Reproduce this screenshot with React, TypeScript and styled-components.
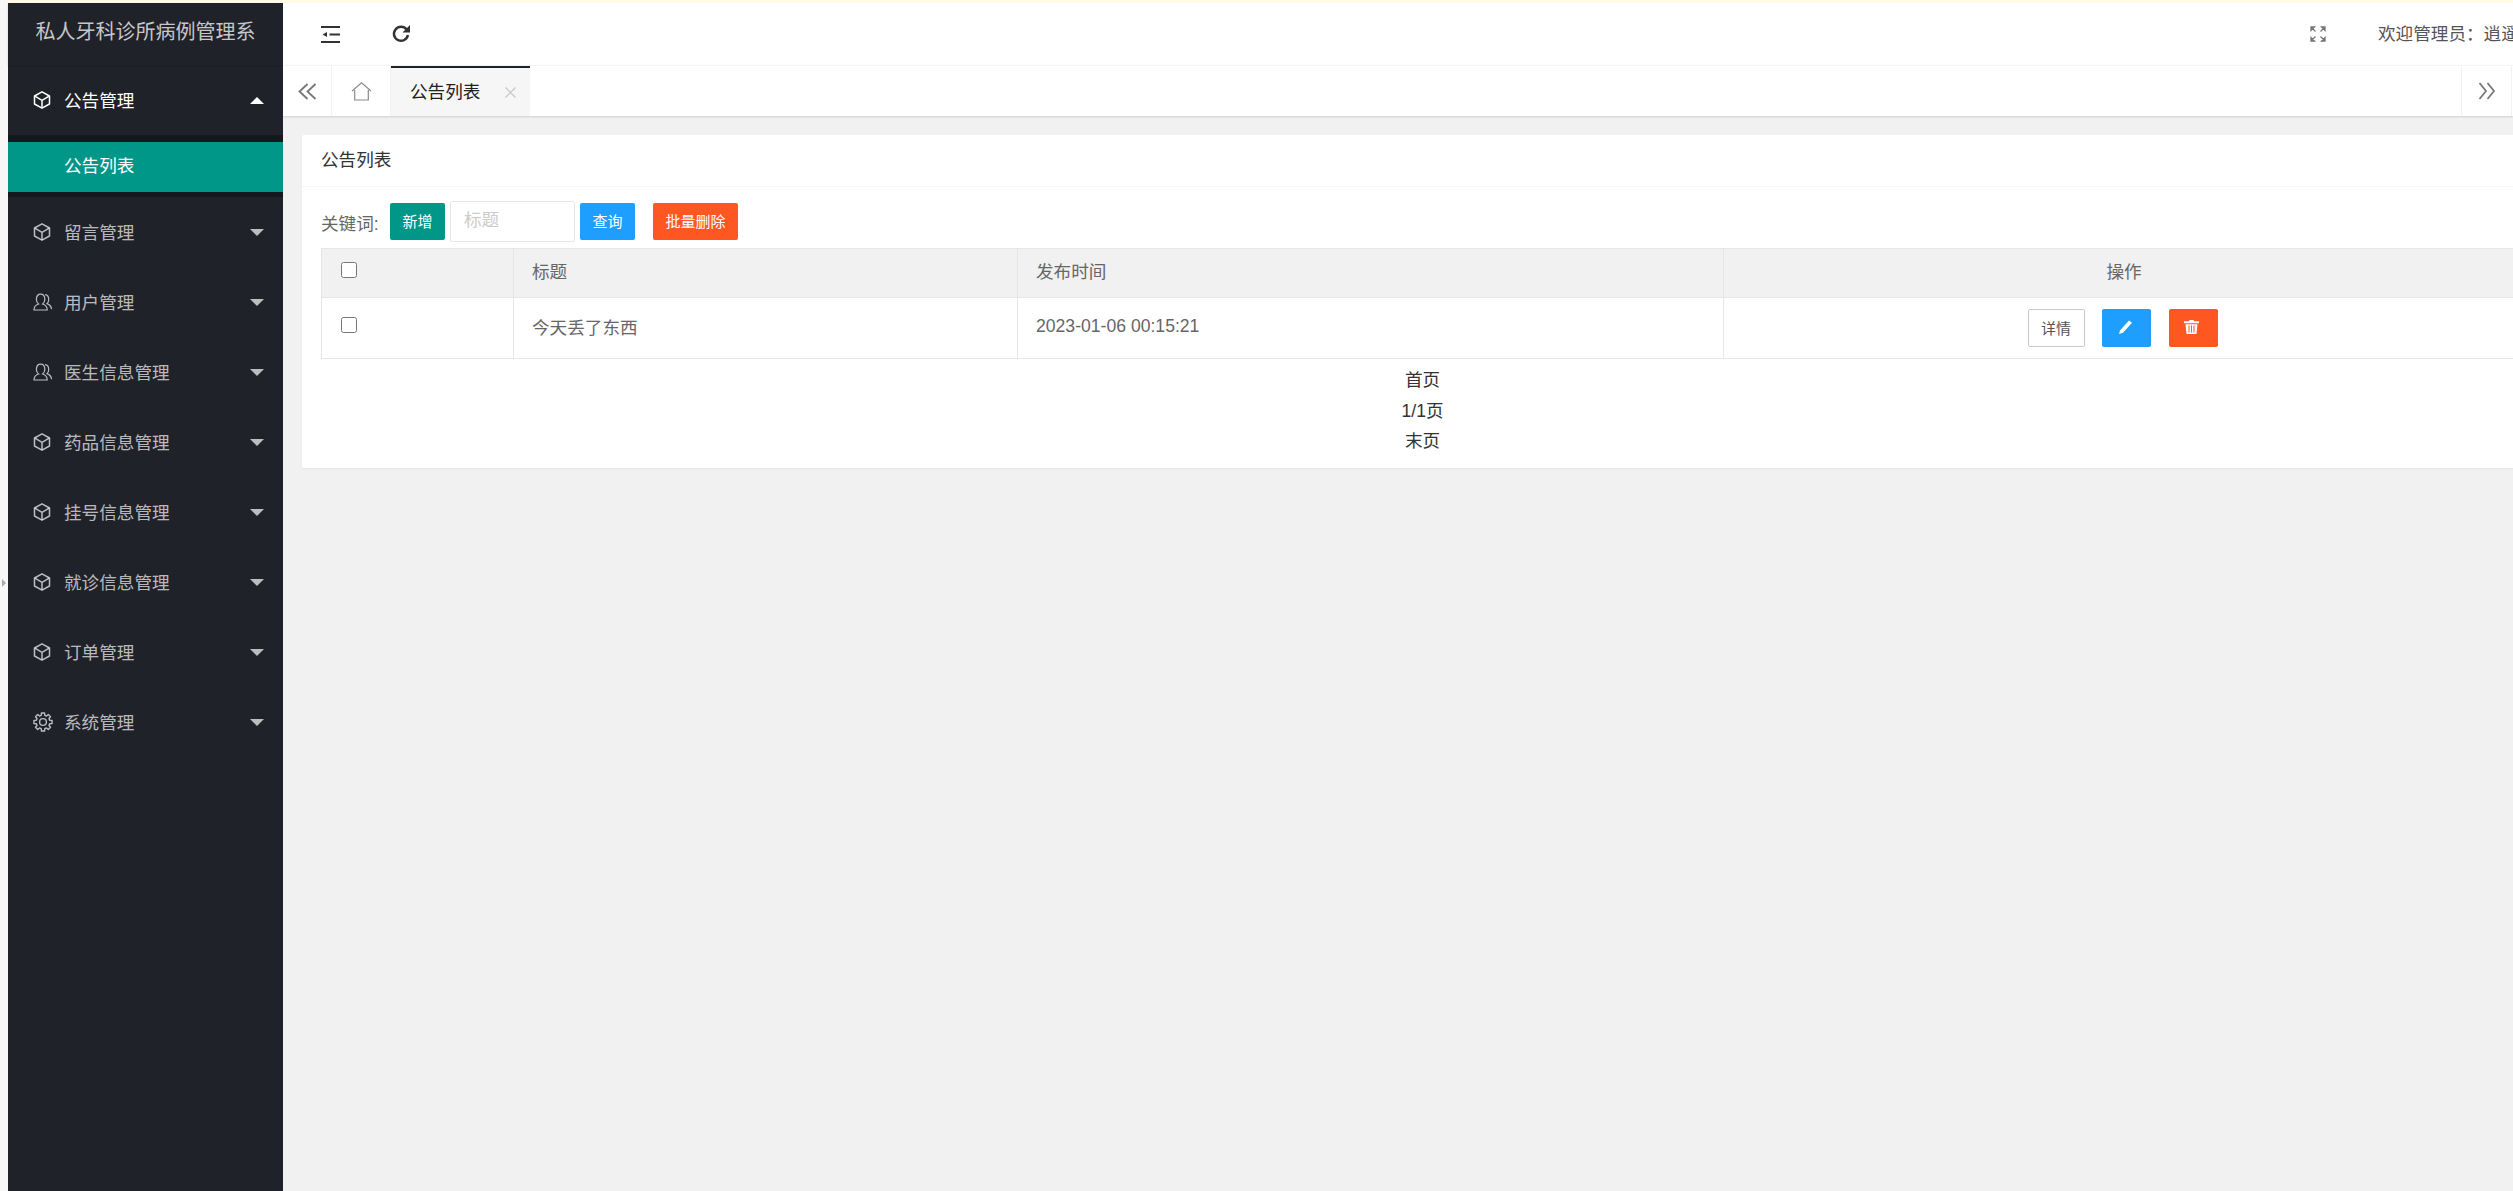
import React from 'react';
import styled, { createGlobalStyle } from 'styled-components';

const GlobalStyle = createGlobalStyle`
  html, body {
    margin: 0;
    padding: 0;
    height: 100%;
    overflow: hidden;
    background: #f7f7f7;
  }
  * { box-sizing: border-box; }
  body {
    font-family: "Liberation Sans", "Noto Sans CJK SC", sans-serif;
    font-size: 17.6px;
    color: #333;
  }
  svg { flex: none; }
`;

const Page = styled.div`
  height: 1191px;
  width: 2513px;
  display: flex;
  flex-direction: column;
  overflow: hidden;
`;

const TopStrip = styled.div`
  height: 3px;
  flex: none;
  background: #fffbe6;
  margin-left: 8px;
`;

const Body = styled.div`
  flex: 1;
  min-height: 0;
  display: flex;
`;

const Gutter = styled.div`
  width: 8px;
  flex: none;
  display: flex;
  align-items: center;
  justify-content: center;
`;

const GutterArrow = styled.span`
  width: 0;
  height: 0;
  margin: -29px 0 0 -1px;
  border-left: 4px solid #aaa;
  border-top: 4px solid transparent;
  border-bottom: 4px solid transparent;
`;

const Sidebar = styled.aside`
  width: 275px;
  flex: none;
  background: #20222a;
  display: flex;
  flex-direction: column;
`;

const Brand = styled.div`
  height: 62px;
  flex: none;
  text-align: center;
  line-height: 59px;
  font-size: 20px;
  color: rgba(255, 255, 255, 0.75);
  white-space: nowrap;
  overflow: hidden;
  box-shadow: 0 1px 2px rgba(0, 0, 0, 0.15);
`;

const MenuItem = styled.div<{ $open?: boolean }>`
  height: 70px;
  flex: none;
  display: flex;
  align-items: center;
  padding: 0 19px 0 25px;
  color: ${(p) => (p.$open ? '#fff' : 'rgba(255, 255, 255, 0.7)')};
`;

const MenuIcon = styled.span`
  width: 31px;
  flex: none;
  display: flex;
  align-items: center;
`;

const MenuLabel = styled.span`
  flex: 1;
  padding-bottom: 2px;
  font-size: 17.6px;
  white-space: nowrap;
`;

const Caret = styled.span<{ $open?: boolean }>`
  width: 0;
  height: 0;
  border-left: 7px solid transparent;
  border-right: 7px solid transparent;
  ${(p) =>
    p.$open
      ? 'border-bottom: 7px solid #fff;'
      : 'border-top: 7px solid rgba(255, 255, 255, 0.7);'}
`;

const SubMenu = styled.div`
  height: 62px;
  flex: none;
  background: #16171d;
  padding: 7px 0 5px;
`;

const SubItem = styled.div`
  height: 50px;
  line-height: 49px;
  padding-left: 56px;
  background: #009688;
  color: #fff;
`;

const Main = styled.main`
  flex: 1;
  min-width: 0;
  display: flex;
  flex-direction: column;
  background: #f1f1f1;
  overflow: hidden;
`;

const Header = styled.header`
  height: 62px;
  flex: none;
  background: #fff;
  display: flex;
  align-items: center;
  justify-content: space-between;
  padding-left: 38px;
  overflow: hidden;
`;

const HeaderTools = styled.div`
  display: flex;
  align-items: center;
  gap: 52px;
  color: #333;
`;

const HeaderRight = styled.div`
  width: 203px;
  flex: none;
  display: flex;
  align-items: center;
  gap: 52px;
  overflow: hidden;
  white-space: nowrap;
  color: #555;
`;

const WelcomeText = styled.span`
  padding-bottom: 3px;
`;

const TabBar = styled.div`
  height: 51px;
  flex: none;
  background: #fff;
  display: flex;
  border-top: 1px solid #f4f4f4;
  box-shadow: 0 1px 2px rgba(0, 0, 0, 0.14);
  position: relative;
`;

const TabButton = styled.div<{ $side: 'left' | 'right'; $width: number }>`
  width: ${(p) => p.$width}px;
  flex: none;
  display: flex;
  align-items: center;
  justify-content: center;
  color: #777;
  ${(p) =>
    p.$side === 'left'
      ? 'border-right: 1px solid #f2f2f2;'
      : 'border-left: 1px solid #f2f2f2; border-right: 1px solid #f2f2f2; margin-right: 1px;'}
`;

const ActiveTab = styled.div`
  width: 139px;
  flex: none;
  display: flex;
  align-items: center;
  justify-content: space-between;
  padding: 0 14px 3px 19px;
  background: #f6f6f6;
  border-top: 2px solid #20222a;
  color: #222;
`;

const CloseMark = styled.span`
  display: flex;
  padding-top: 3px;
  color: #c4c4c4;
`;

const Spacer = styled.div`
  flex: 1;
`;

const Content = styled.div`
  flex: 1;
  padding: 19px;
`;

const Card = styled.section`
  width: 2241px;
  background: #fff;
  border-radius: 2px;
  box-shadow: 0 1px 2px rgba(0, 0, 0, 0.05);
`;

const CardHeader = styled.div`
  height: 52px;
  line-height: 51px;
  padding: 0 19px;
  border-bottom: 1px solid #f6f6f6;
  color: #333;
  font-size: 17.6px;
`;

const CardBody = styled.div`
  padding: 14px 19px 11px;
`;

const Toolbar = styled.div`
  height: 47px;
  display: flex;
  align-items: flex-start;
`;

const KeywordLabel = styled.label`
  width: 69px;
  flex: none;
  margin-top: 11px;
  font-size: 17.6px;
  line-height: 24px;
  white-space: nowrap;
  color: #666;
`;

const FilledButton = styled.button<{ $color: string; $width: number; $gap?: number }>`
  width: ${(p) => p.$width}px;
  height: 37px;
  margin-top: 2px;
  margin-left: ${(p) => p.$gap ?? 0}px;
  flex: none;
  border: none;
  border-radius: 2px;
  padding: 0 0 2px;
  font: inherit;
  font-size: 15px;
  color: #fff;
  background: ${(p) => p.$color};
`;

const SearchInput = styled.input`
  width: 125px;
  height: 41px;
  flex: none;
  margin: 0 5px;
  padding: 0 13px 3px;
  border: 1px solid #e6e6e6;
  border-radius: 2px;
  font: inherit;
  font-size: 17.6px;
  outline: none;
  &::placeholder {
    color: #ccc;
  }
`;

const Table = styled.table`
  width: 2203px;
  border-collapse: collapse;
  table-layout: fixed;
  color: #666;
`;

const Th = styled.th<{ $center?: boolean }>`
  height: 49px;
  padding: 0 18px 5px;
  background: #f1f1f1;
  border: 1px solid #e6e6e6;
  font-weight: 400;
  font-size: 17.6px;
  text-align: ${(p) => (p.$center ? 'center' : 'left')};
`;

const Td = styled.td<{ $center?: boolean }>`
  height: 61px;
  padding: ${(p) => (p.$center ? '0 18px' : '0 18px 4px')};
  border: 1px solid #e6e6e6;
  font-size: 17.6px;
  text-align: ${(p) => (p.$center ? 'center' : 'left')};
`;

const CheckBox = styled.input.attrs({ type: 'checkbox' })`
  width: 16px;
  height: 16px;
  margin: 0 0 2px 1px;
  display: block;
`;

const RowActions = styled.div`
  display: flex;
  justify-content: center;
  gap: 17.5px;
  padding-right: 3px;
`;

const OutlineButton = styled.button`
  width: 57px;
  height: 38px;
  padding: 0 0 2px;
  border: 1px solid #c9c9c9;
  border-radius: 2px;
  background: #fff;
  font: inherit;
  font-size: 15px;
  color: #555;
`;

const IconButton = styled.button<{ $color: string }>`
  width: 49px;
  height: 38px;
  padding: 0 3px 3px 0;
  border: none;
  border-radius: 2px;
  display: flex;
  align-items: center;
  justify-content: center;
  color: #fff;
  background: ${(p) => p.$color};
`;

const Pager = styled.div`
  padding-top: 6px;
  text-align: center;
  line-height: 30.6px;
  color: #333;
`;

const CubeIcon = () => (
  <svg width="18" height="18" viewBox="0 0 18 18" fill="none" stroke="currentColor" strokeWidth="1.5" strokeLinejoin="round">
    <path d="M9 .8 16.500 5v8L9 17.200 1.500 13V5z" />
    <path d="M1.900 5.200 9 9.300l7.100-4.100M9 9.300v7.500" />
  </svg>
);

const PeopleIcon = () => (
  <svg width="20" height="18" viewBox="0 0 20 18" fill="none" stroke="currentColor" strokeWidth="1.2">
    <path d="M1 17c0-3.600 1.600-5 4.600-6-1.400-1-2.200-2.600-2.200-4.600C3.400 3.200 5 1.200 7.600 1.200s4.200 2 4.200 5.200c0 2-.8 3.600-2.200 4.600 3 1 4.600 2.400 4.600 6z" />
    <path d="M12 1.600c2.400.2 3.700 2.200 3.700 4.800 0 1.800-.6 3.200-1.700 4.200 2.600 1 4.200 2.600 4.600 5.600" />
  </svg>
);

// eight square teeth around the hub
const gearPath = Array.from({ length: 8 }, (_, i) => {
  const a = (i * Math.PI) / 4;
  const pt = (r: number, d: number) =>
    `${(10 + r * Math.cos(a + d)).toFixed(2)} ${(10 + r * Math.sin(a + d)).toFixed(2)}`;
  return `${i === 0 ? 'M' : 'L'}${pt(6.9, -0.26)}L${pt(9.2, -0.17)}L${pt(9.2, 0.17)}L${pt(6.9, 0.26)}`;
}).join('') + 'Z';

const GearIcon = () => (
  <svg width="20" height="20" viewBox="0 0 20 20" fill="none" stroke="currentColor" strokeWidth="1.4" strokeLinejoin="round">
    <path d={gearPath} />
    <circle cx="10" cy="10" r="3.400" />
  </svg>
);

const ShrinkIcon = () => (
  <svg width="19" height="17" viewBox="0 0 19 17" fill="currentColor">
    <rect x="0" y="0" width="19" height="2" />
    <rect x="0" y="15" width="19" height="2" />
    <rect x="8.500" y="7.500" width="10.500" height="2" />
    <path d="M1.500 8.500 6 6v5z" />
  </svg>
);

const RefreshIcon = () => (
  <svg width="18" height="18" viewBox="0 0 18 18" fill="none" stroke="currentColor" strokeWidth="2.500">
    <path d="M14.600 4.600A7 7 0 1 0 15.900 10" />
    <path d="M18 0v7.500h-7.500z" fill="currentColor" stroke="none" />
  </svg>
);

const FullscreenIcon = () => (
  <svg width="16" height="16" viewBox="0 0 16 16" fill="#777" stroke="#777" strokeWidth="1.300">
    <path d="M1 1h3.500L1 4.500zM1.500 1.500l4 4M15 1h-3.500L15 4.500zM14.500 1.500l-4 4M1 15h3.500L1 11.500zM1.500 14.500l4-4M15 15h-3.500L15 11.500zM14.500 14.500l-4-4" />
  </svg>
);

const DoubleLeftIcon = () => (
  <svg width="19" height="17" viewBox="0 0 19 17" fill="none" stroke="currentColor" strokeWidth="1.800">
    <path d="M9.500 1 1.500 8.500l8 7.500M17.500 1l-8 7.500 8 7.500" />
  </svg>
);

const DoubleRightIcon = () => (
  <svg width="18" height="18" viewBox="0 0 18 18" fill="none" stroke="currentColor" strokeWidth="1.800">
    <path d="M1.500 1 8 9l-6.500 8M9.500 1 16 9l-6.500 8" />
  </svg>
);

const HomeIcon = () => (
  <svg width="21" height="19" viewBox="0 0 21 19" fill="none" stroke="#8a8a8a" strokeWidth="1.200">
    <path d="M1 9 10.500 .9 20 9" />
    <path d="M3.700 8v10h13.600V8" />
  </svg>
);

const CloseIcon = () => (
  <svg width="11" height="11" viewBox="0 0 11 11" fill="none" stroke="currentColor" strokeWidth="1.100">
    <path d="M.5.500l10 10M10.500.500l-10 10" />
  </svg>
);

const PencilIcon = () => (
  <svg width="13" height="14" viewBox="0 0 13 14" fill="currentColor">
    <path d="M10 .5 13 2.800 4 12.700 0 14l1.200-3.800z" />
  </svg>
);

const TrashIcon = () => (
  <svg width="15" height="14" viewBox="0 0 15 14" fill="currentColor" fillRule="evenodd">
    <path d="M5.500 0h4l.5 1.300h5v1.900H0V1.300h5zM1.500 4.200h12l-1 9.800h-10zM4.500 5.600v6.800h1V5.600zM7 5.600v6.800h1V5.600zM9.500 5.600v6.800h1V5.600z" />
  </svg>
);

const menus: { label: string; icon: React.ReactNode }[] = [
  { label: '留言管理', icon: <CubeIcon /> },
  { label: '用户管理', icon: <PeopleIcon /> },
  { label: '医生信息管理', icon: <PeopleIcon /> },
  { label: '药品信息管理', icon: <CubeIcon /> },
  { label: '挂号信息管理', icon: <CubeIcon /> },
  { label: '就诊信息管理', icon: <CubeIcon /> },
  { label: '订单管理', icon: <CubeIcon /> },
  { label: '系统管理', icon: <GearIcon /> },
];

const App: React.FC = () => {
  return (
    <Page>
      <GlobalStyle />
      <TopStrip />
      <Body>
        <Gutter>
          <GutterArrow />
        </Gutter>
        <Sidebar>
          <Brand>私人牙科诊所病例管理系</Brand>
          <MenuItem $open>
            <MenuIcon>
              <CubeIcon />
            </MenuIcon>
            <MenuLabel>公告管理</MenuLabel>
            <Caret $open />
          </MenuItem>
          <SubMenu>
            <SubItem>公告列表</SubItem>
          </SubMenu>
          {menus.map((m) => (
            <MenuItem key={m.label}>
              <MenuIcon>{m.icon}</MenuIcon>
              <MenuLabel>{m.label}</MenuLabel>
              <Caret />
            </MenuItem>
          ))}
        </Sidebar>
        <Main>
          <Header>
            <HeaderTools>
              <ShrinkIcon />
              <RefreshIcon />
            </HeaderTools>
            <HeaderRight>
              <FullscreenIcon />
              <WelcomeText>欢迎管理员：逍遥</WelcomeText>
            </HeaderRight>
          </Header>
          <TabBar>
            <TabButton $side="left" $width={49}>
              <DoubleLeftIcon />
            </TabButton>
            <TabButton $side="left" $width={59}>
              <HomeIcon />
            </TabButton>
            <ActiveTab>
              公告列表
              <CloseMark>
                <CloseIcon />
              </CloseMark>
            </ActiveTab>
            <Spacer />
            <TabButton $side="right" $width={51}>
              <DoubleRightIcon />
            </TabButton>
          </TabBar>
          <Content>
            <Card>
              <CardHeader>公告列表</CardHeader>
              <CardBody>
                <Toolbar>
                  <KeywordLabel>关键词:</KeywordLabel>
                  <FilledButton $color="#009688" $width={55}>
                    新增
                  </FilledButton>
                  <SearchInput placeholder="标题" />
                  <FilledButton $color="#1e9fff" $width={55}>
                    查询
                  </FilledButton>
                  <FilledButton $color="#ff5722" $width={85} $gap={18}>
                    批量删除
                  </FilledButton>
                </Toolbar>
                <Table>
                  <colgroup>
                    <col width="192" />
                    <col width="504" />
                    <col width="706" />
                    <col width="801" />
                  </colgroup>
                  <thead>
                    <tr>
                      <Th>
                        <CheckBox readOnly />
                      </Th>
                      <Th>标题</Th>
                      <Th>发布时间</Th>
                      <Th $center>操作</Th>
                    </tr>
                  </thead>
                  <tbody>
                    <tr>
                      <Td>
                        <CheckBox readOnly />
                      </Td>
                      <Td>今天丢了东西</Td>
                      <Td>2023-01-06 00:15:21</Td>
                      <Td $center>
                        <RowActions>
                          <OutlineButton>详情</OutlineButton>
                          <IconButton $color="#1e9fff">
                            <PencilIcon />
                          </IconButton>
                          <IconButton $color="#ff5722">
                            <TrashIcon />
                          </IconButton>
                        </RowActions>
                      </Td>
                    </tr>
                  </tbody>
                </Table>
                <Pager>
                  <div>首页</div>
                  <div>1/1页</div>
                  <div>末页</div>
                </Pager>
              </CardBody>
            </Card>
          </Content>
        </Main>
      </Body>
    </Page>
  );
};

export default App;
